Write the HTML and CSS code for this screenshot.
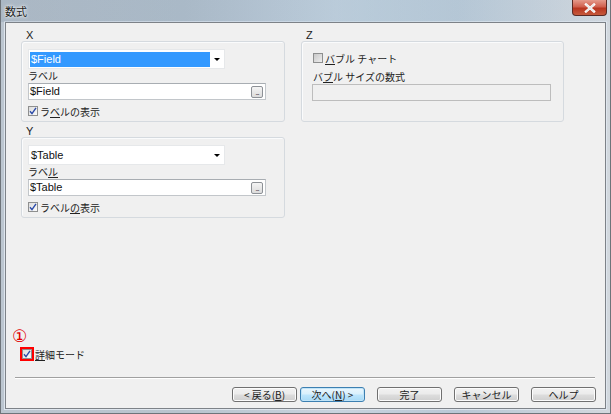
FILE: index.html
```html
<!DOCTYPE html>
<html lang="ja">
<head>
<meta charset="utf-8">
<title>数式</title>
<link rel="stylesheet" href="styles.css">
</head>
<body>
<div class="win">
  <div class="titlebar">
    <span class="title">数式</span>
    <span class="close"><svg width="12" height="10" viewBox="0 0 12 10"><path d="M2 1.5 L10 8.5 M10 1.5 L2 8.5" stroke="#fff" stroke-width="2.4" stroke-linecap="square"/><path d="M2 1.5 L10 8.5 M10 1.5 L2 8.5" stroke="#e8e8e8" stroke-width="1.2"/></svg></span>
  </div>
  <div class="client">
    <div class="columns">
      <div class="col">
        <div class="group">
          <div class="glabel">X</div>
          <div class="gbox">
            <div class="combo"><span class="combo-sel">$Field</span><span class="arrow"></span></div>
            <div class="flabel">ラベル</div>
            <div class="field"><span class="ftext">$Field</span><span class="dots">...</span></div>
            <div class="check"><span class="cb"><svg width="8" height="8" viewBox="0 0 8 8"><path d="M1 4.2 L3 6.6 L7 0.8" fill="none" stroke="#2b4aa8" stroke-width="1.4"/></svg></span><span>ラ<u>ベ</u>ルの表示</span></div>
          </div>
        </div>
        <div class="group gy">
          <div class="glabel">Y</div>
          <div class="gbox">
            <div class="combo"><span class="combo-val">$Table</span><span class="arrow"></span></div>
            <div class="flabel">ラベ<u>ル</u></div>
            <div class="field"><span class="ftext">$Table</span><span class="dots">...</span></div>
            <div class="check"><span class="cb"><svg width="8" height="8" viewBox="0 0 8 8"><path d="M1 4.2 L3 6.6 L7 0.8" fill="none" stroke="#2b4aa8" stroke-width="1.4"/></svg></span><span>ラベル<u>の</u>表示</span></div>
          </div>
        </div>
      </div>
      <div class="col">
        <div class="group">
          <div class="glabel">Z</div>
          <div class="gbox zbox">
            <div class="check zcheck"><span class="cb off"></span><span><u>バ</u>ブル チャート</span></div>
            <div class="flabel zlabel">バ<u>ブ</u>ル サイズの数式</div>
            <div class="field disabled"></div>
          </div>
        </div>
      </div>
    </div>
    <div class="spacer"></div>
    <div class="detail">
      <span class="mark">①</span>
      <span class="cb marked"><svg width="8" height="8" viewBox="0 0 8 8"><path d="M1 4.2 L3 6.6 L7 0.8" fill="none" stroke="#2b4aa8" stroke-width="1.4"/></svg></span>
      <span class="dtext"><u>詳</u>細モード</span>
    </div>
    <div class="sep"></div>
    <div class="buttons">
      <span class="btn">&lt; 戻る(<u>B</u>)</span>
      <span class="btn def">次へ(<u>N</u>) &gt;</span>
      <span class="btn gap">完了</span>
      <span class="btn gap">キャンセル</span>
      <span class="btn gap">ヘルプ</span>
    </div>
  </div>
</div>
</body>
</html>
```

FILE: styles.css
```css
html, body {
  margin: 0;
  padding: 0;
}
body {
  font-family: "Liberation Sans", "Noto Sans CJK JP", sans-serif;
  font-size: 11px;
  color: #1e1e1e;
  background: #c9d1da;
}
.win {
  width: 611px;
  height: 414px;
  box-sizing: border-box;
  display: flex;
  flex-direction: column;
  background: linear-gradient(90deg, #bcc6d0 0%, #b8c4ce 30%, #c9d4df 55%, #b9c8d6 75%, #d2d8de 100%);
  border-left: 1px solid #6e747a;
  border-right: 1px solid #6e747a;
  border-bottom: 1px solid #6e747a;
}
.titlebar {
  height: 22px;
  flex: none;
  display: flex;
  align-items: flex-start;
  position: relative;
  background: linear-gradient(90deg, rgba(120,140,160,0.25) 0%, rgba(90,130,170,0.15) 40%, rgba(160,190,210,0.35) 60%, rgba(200,210,220,0.2) 100%);
}
.title {
  margin: 4px 0 0 4px;
  font-family: "Noto Sans CJK JP", sans-serif;
  font-size: 11px;
  line-height: 14px;
  color: #202020;
  text-shadow: 0 0 4px #fff, 0 0 2px #fff;
}
.close {
  position: absolute;
  right: 3px;
  top: 0;
  width: 35px;
  height: 16px;
  box-sizing: border-box;
  border: 1px solid #5b2a24;
  border-top: none;
  border-radius: 0 0 4px 4px;
  background: linear-gradient(180deg, #e59a8b 0%, #d0604e 45%, #b83520 55%, #c65a3c 100%);
  display: flex;
  align-items: center;
  justify-content: center;
}
.client {
  flex: 1;
  margin: 0 4px 4px 4px;
  border: 1px solid #7d8288;
  background: #f0f0f0;
  display: flex;
  flex-direction: column;
  box-shadow: 0 0 0 1px #dfe6ee;
}
.columns {
  display: flex;
  gap: 16px;
  padding: 7px 0 0 15px;
}
.col {
  display: flex;
  flex-direction: column;
}
.col:first-child { width: 264px; }
.col:last-child { width: 263px; }
.group { display: flex; flex-direction: column; }
.gy { margin-top: 4px; }
.glabel {
  height: 11px;
  line-height: 11px;
  padding-left: 5px;
  color: #222;
  font-size: 11px;
}
.gbox {
  height: 81px;
  box-sizing: border-box;
  border: 1px solid #d5dadf;
  border-radius: 3px;
  box-shadow: inset 1px 1px 0 #fafbfc;
  padding: 7px 0 0 6px;
  display: flex;
  flex-direction: column;
  align-items: flex-start;
}
.combo {
  width: 197px;
  height: 20px;
  box-sizing: border-box;
  background: #fff;
  border: 1px solid #e6e8ea;
  display: flex;
  align-items: center;
  padding: 0 0 0 1px;
  position: relative;
}
.combo-sel {
  width: 180px;
  height: 15px;
  line-height: 15px;
  background: #3399ff;
  color: #fff;
  padding-left: 1px;
  box-sizing: border-box;
}
.combo-val {
  width: 180px;
  height: 15px;
  line-height: 15px;
  padding-left: 1px;
  box-sizing: border-box;
  color: #111;
}
.arrow {
  position: absolute;
  right: 4px;
  top: 8px;
  width: 0;
  height: 0;
  border-left: 3px solid transparent;
  border-right: 3px solid transparent;
  border-top: 3px solid #000;
}
.flabel {
  height: 13px;
  line-height: 13px;
  font-family: "Noto Sans CJK JP", sans-serif;
  font-size: 10px;
  color: #222;
}
.field {
  margin-top: 1px;
  width: 238px;
  height: 17px;
  box-sizing: border-box;
  background: #fff;
  border: 1px solid #c2c6ca;
  border-top-color: #a8adb2;
  display: flex;
  align-items: center;
  justify-content: space-between;
  padding: 0 2px 0 1px;
}
.ftext { line-height: 15px; color: #111; }
.dots {
  width: 12px;
  height: 12px;
  box-sizing: border-box;
  border: 1px solid #8d9196;
  border-radius: 2px;
  background: linear-gradient(180deg, #f4f4f4, #dcdcdc);
  font-size: 8px;
  line-height: 12px;
  text-align: center;
  color: #333;
  letter-spacing: -1px;
}
.check {
  margin-top: 5px;
  height: 12px;
  display: flex;
  align-items: center;
  gap: 2px;
  font-family: "Noto Sans CJK JP", sans-serif;
  font-size: 10px;
  color: #222;
}
.cb {
  width: 10px;
  height: 10px;
  box-sizing: border-box;
  border: 1px solid #8e8f8f;
  background: linear-gradient(135deg, #dcdcdc, #fbfbfb);
  display: inline-flex;
  align-items: center;
  justify-content: center;
  flex: none;
}
.cb.off {
  background: linear-gradient(135deg, #c8c8c8, #eeeeee);
}
.zbox { padding: 11px 0 0 11px; }
.zcheck { margin-top: 0; height: 10px; }
.zlabel { margin-top: 7px; }
.field.disabled {
  width: 239px;
  background: #f0f0f0;
  border-color: #bdbdbd;
  margin-left: -1px;
}
.spacer { flex: 1; }
.detail {
  position: relative;
  height: 12px;
  margin: 0 0 17px 16px;
  display: flex;
  align-items: center;
  gap: 2px;
  font-family: "Noto Sans CJK JP", sans-serif;
  font-size: 10px;
}
.cb.marked {
  outline: 2px solid #ff0000;
}
.dtext { color: #222; margin-left: 1px; }
.mark {
  position: absolute;
  left: -10px;
  top: -21px;
  color: #e00000;
  font-family: "DejaVu Sans", sans-serif;
  font-size: 17px;
  line-height: 18px;
}
.sep {
  height: 1px;
  margin: 0 10px 0 9px;
  background: #a0a0a0;
  border-bottom: 1px solid #fff;
}
.buttons {
  display: flex;
  justify-content: flex-end;
  margin: 8px 9px 6px 0;
}
.btn {
  width: 65px;
  height: 15px;
  box-sizing: border-box;
  border: 1px solid #707070;
  border-radius: 3px;
  background: linear-gradient(180deg, #f2f2f2 0%, #ebebeb 48%, #dddddd 52%, #cfcfcf 100%);
  box-shadow: inset 0 0 0 1px #fcfcfc;
  font-family: "Noto Sans CJK JP", sans-serif;
  font-size: 10px;
  line-height: 13px;
  text-align: center;
  color: #222;
}
.btn.def {
  margin-left: 3px;
  border-color: #3c7fb1;
  background: linear-gradient(180deg, #eaf6fd 0%, #d9f0fc 48%, #bee6fd 52%, #a7d9f5 100%);
  box-shadow: inset 0 0 0 1px #c0e4f8;
}
.btn.gap { margin-left: 12px; }
```
